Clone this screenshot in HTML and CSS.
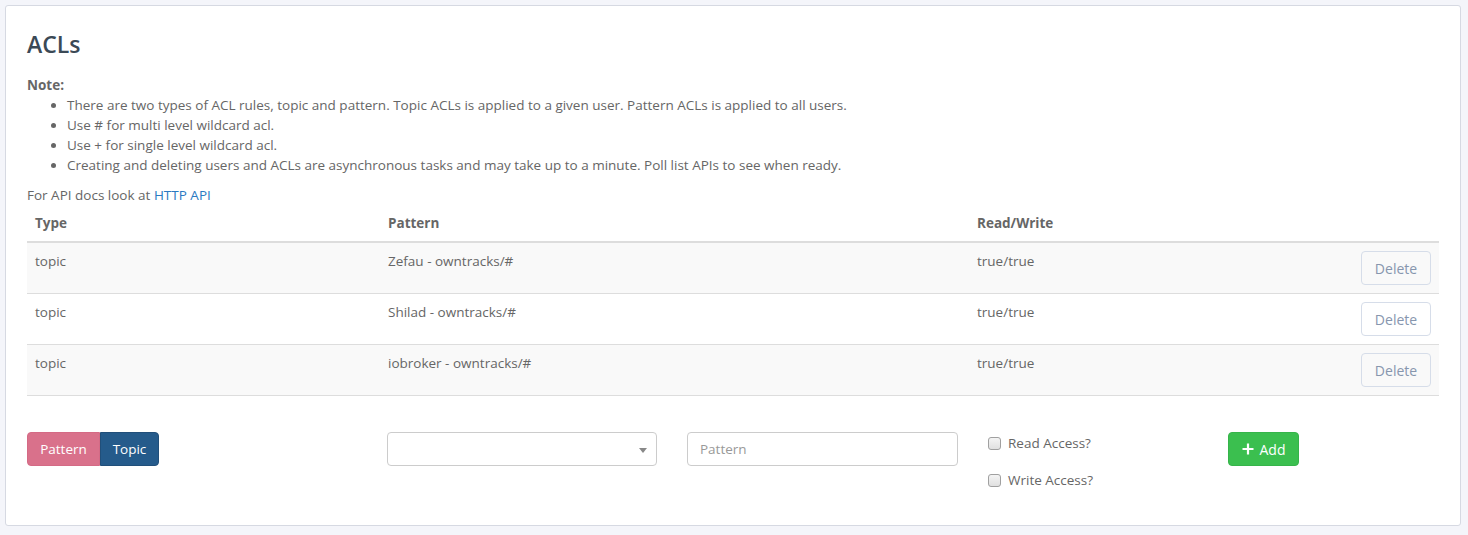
FILE: index.html
```html
<!DOCTYPE html>
<html lang="en">
<head>
<meta charset="utf-8">
<title>ACLs</title>
<link rel="stylesheet" href="styles.css">
</head>
<body>
<div class="card">
  <h3 class="title">ACLs</h3>
  <p class="note-label"><strong>Note:</strong></p>
  <ul class="notes">
    <li>There are two types of ACL rules, topic and pattern. Topic ACLs is applied to a given user. Pattern ACLs is applied to all users.</li>
    <li>Use # for multi level wildcard acl.</li>
    <li>Use + for single level wildcard acl.</li>
    <li>Creating and deleting users and ACLs are asynchronous tasks and may take up to a minute. Poll list APIs to see when ready.</li>
  </ul>
  <p class="docs">For API docs look at <a href="#" class="link">HTTP API</a></p>
  <table class="acl-table">
    <thead>
      <tr>
        <th class="col-type">Type</th>
        <th class="col-pattern">Pattern</th>
        <th class="col-rw">Read/Write</th>
        <th class="col-action"></th>
      </tr>
    </thead>
    <tbody>
      <tr>
        <td>topic</td>
        <td>Zefau - owntracks/#</td>
        <td>true/true</td>
        <td class="cell-action"><button class="btn-delete">Delete</button></td>
      </tr>
      <tr>
        <td>topic</td>
        <td>Shilad - owntracks/#</td>
        <td>true/true</td>
        <td class="cell-action"><button class="btn-delete">Delete</button></td>
      </tr>
      <tr>
        <td>topic</td>
        <td>iobroker - owntracks/#</td>
        <td>true/true</td>
        <td class="cell-action"><button class="btn-delete">Delete</button></td>
      </tr>
    </tbody>
  </table>
  <form class="add-form">
    <div class="type-toggle">
      <button type="button" class="btn-pattern">Pattern</button><button type="button" class="btn-topic">Topic</button>
    </div>
    <div class="select-box"><span class="caret"></span></div>
    <input class="pattern-input" type="text" placeholder="Pattern">
    <div class="checks">
      <label class="check"><span class="box"></span>Read Access?</label>
      <label class="check"><span class="box"></span>Write Access?</label>
    </div>
    <button type="button" class="btn-add"><svg class="plus" width="12" height="12" viewBox="0 0 12 12"><path d="M6 0.5v11M0.5 6h11" stroke="#fff" stroke-width="2.2" fill="none"/></svg>Add</button>
  </form>
</div>
</body>
</html>
```
FILE: styles.css
```css
* { box-sizing: border-box; }
html, body { margin: 0; padding: 0; }
body {
  background: #f4f5fa;
  padding: 5px 7px 9px 5px;
  font-family: "Open Sans", "DejaVu Sans", sans-serif;
  font-size: 13.5px;
  line-height: 20px;
  color: #666;
}
.card {
  background: #fff;
  border: 1px solid #d6d9e2;
  border-radius: 3px;
  padding: 24px 21px 34px 21px;
  height: 521px;
}
.title {
  margin: 0 0 17px 0;
  font-size: 23px;
  line-height: 28px;
  font-weight: 600;
  color: #3b4956;
}
.note-label { margin: 0; }
.note-label strong { font-weight: 700; color: #666; }
.notes { margin: 0 0 10px 0; padding-left: 40px; }
.notes li { line-height: 20px; }
.docs { margin: 0; }
.link { color: #2a79c2; text-decoration: none; }

.acl-table {
  width: 100%;
  border-collapse: collapse;
  margin: 0 0 36px 0;
}
.acl-table th, .acl-table td {
  padding: 8px;
  text-align: left;
  vertical-align: top;
  line-height: 20px;
}
.acl-table th {
  font-weight: 700;
  color: #666;
  border-bottom: 2px solid #ddd;
}
.acl-table td { border-bottom: 1px solid #ddd; height: 51px; }
.acl-table tbody tr:nth-child(odd) { background: #f9f9f9; }
.col-type { width: 353px; }
.col-pattern { width: 589px; }
.col-action { width: 90px; }
.acl-table td.cell-action { text-align: right; padding-right: 8px; }
.btn-delete {
  font-family: inherit;
  font-size: 14px;
  color: #8796ae;
  background: transparent;
  border: 1px solid #d6dde9;
  border-radius: 4px;
  width: 70px;
  height: 34px;
  padding: 0;
}

.add-form {
  display: flex;
  align-items: flex-start;
}
.type-toggle { display: flex; width: 360px; }
.btn-pattern, .btn-topic {
  font-family: inherit;
  font-size: 13.5px;
  color: #fff;
  height: 34px;
  border: 1px solid transparent;
  padding: 0;
}
.btn-pattern {
  background: #d9718b;
  border-color: #d46a85;
  border-radius: 4px 0 0 4px;
  width: 73px;
}
.btn-topic {
  background: #255b8b;
  border-color: #214f7a;
  border-radius: 0 4px 4px 0;
  width: 59px;
}
.select-box {
  position: relative;
  width: 270px;
  height: 34px;
  border: 1px solid #ccc;
  border-radius: 4px;
  margin-right: 30px;
}
.caret {
  position: absolute;
  right: 9px;
  top: 15px;
  width: 0;
  height: 0;
  border-left: 4px solid transparent;
  border-right: 4px solid transparent;
  border-top: 5px solid #888;
}
.pattern-input {
  width: 271px;
  height: 34px;
  border: 1px solid #ccc;
  border-radius: 4px;
  padding: 6px 12px;
  font-family: inherit;
  font-size: 13.5px;
  color: #555;
  margin-right: 30px;
}
.pattern-input::placeholder { color: #999; }
.checks {
  width: 240px;
  display: flex;
  flex-direction: column;
  gap: 17px;
  padding-top: 1px;
}
.check {
  display: flex;
  align-items: center;
  font-size: 13.5px;
  color: #666;
  line-height: 20px;
}
.box {
  width: 13px;
  height: 13px;
  border: 1px solid #a0a0a0;
  border-radius: 3px;
  background: linear-gradient(#f4f4f4, #e0e0e0);
  margin: 0 7px 0 0;
}
.btn-add {
  font-family: inherit;
  font-size: 14px;
  color: #fff;
  background: #3bbf4f;
  border: 1px solid #36b44a;
  border-radius: 4px;
  width: 71px;
  height: 34px;
  display: flex;
  align-items: center;
  justify-content: center;
  gap: 6px;
  padding: 0;
}
```
